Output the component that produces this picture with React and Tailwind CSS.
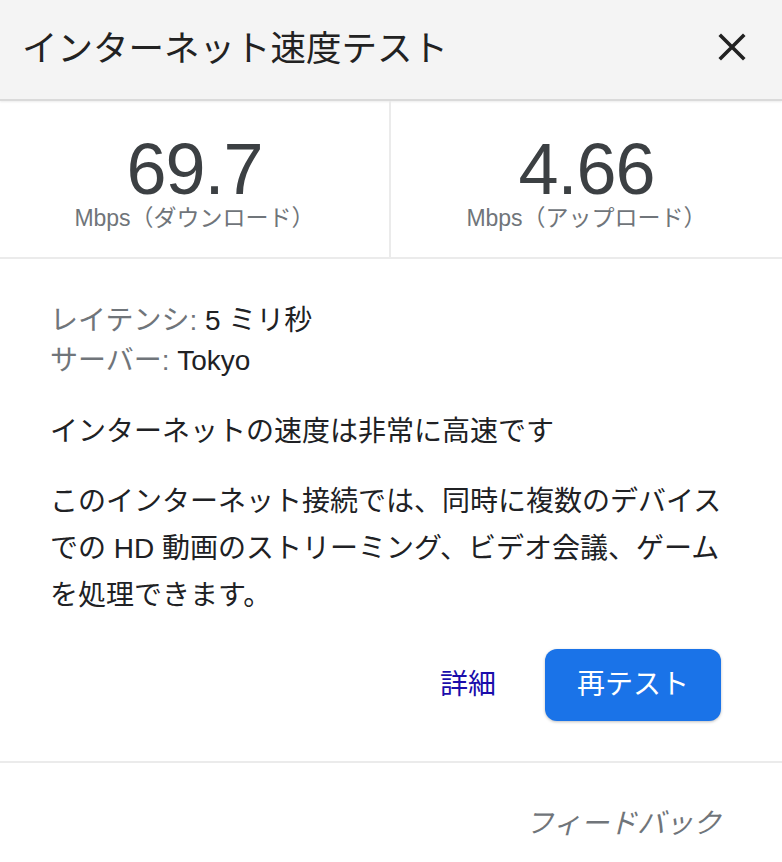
import React from "react";

const font = { fontFamily: '"Liberation Sans", "Noto Sans CJK JP", sans-serif' };

const Metric = ({ value, label, className }) => (
  <div className={`flex flex-col items-center pt-[30px] ${className}`}>
    <div className="text-[72px] leading-[76px] text-[#3c4043] tracking-[-1px]">{value}</div>
    <div className="text-[23px] leading-[30px] text-[#70757a] -mt-[4px]">{label}</div>
  </div>
);

export default function App() {
  return (
    <div className="w-[782px] h-[862px] bg-white overflow-hidden" style={font}>
      {/* Header */}
      <div className="h-[101px] bg-[#f4f4f4] border-b-2 border-[#dadada] flex items-center justify-between pl-[22px] pr-[32px] shadow-[0_1px_2px_rgba(0,0,0,0.08)]">
        <h1 className="text-[35.5px] text-[#222]">インターネット速度テスト</h1>
        <button className="w-[36px] h-[36px] flex items-center justify-center -mt-[5px]">
          <svg width="28" height="28" viewBox="0 0 28 28">
            <path d="M3 3 L25 25 M25 3 L3 25" stroke="#222" strokeWidth="3.6" strokeLinecap="square" />
          </svg>
        </button>
      </div>

      {/* Metrics */}
      <div className="grid grid-cols-2 h-[158px] border-b-2 border-[#ebebeb]">
        <Metric value="69.7" label="Mbps（ダウンロード）" className="border-r-2 border-[#ebebeb]" />
        <Metric value="4.66" label="Mbps（アップロード）" />
      </div>

      {/* Body */}
      <div className="pl-[50px] pr-[60px] pt-[42px] pb-[40px]">
        <div className="text-[28px] leading-[40px]">
          <div>
            <span className="text-[#70757a]">レイテンシ: </span>
            <span className="text-[#202124]">5 ミリ秒</span>
          </div>
          <div>
            <span className="text-[#70757a]">サーバー: </span>
            <span className="text-[#202124]">Tokyo</span>
          </div>
        </div>
        <p className="mt-[31px] text-[28px] leading-[40px] text-[#202124]">
          インターネットの速度は非常に高速です
        </p>
        <p className="mt-[26px] text-[28px] leading-[47px] text-[#202124] w-[680px]">
          このインターネット接続では、同時に複数のデバイスでの HD 動画のストリーミング、ビデオ会議、ゲームを処理できます。
        </p>
        <div className="mt-[30px] flex items-center justify-end gap-[49px] pr-[1px]">
          <a className="text-[28px] text-[#1a0dab] cursor-pointer">詳細</a>
          <button className="w-[176px] h-[72px] rounded-[12px] bg-[#1a73e8] text-white text-[28px] shadow-[0_1px_3px_rgba(0,0,0,0.25)]">
            再テスト
          </button>
        </div>
      </div>

      {/* Footer */}
      <div className="border-t-2 border-[#ebebeb] pt-[41px] pr-[61px] flex justify-end">
        <span className="text-[28px] leading-[40px] italic text-[#70757a]">フィードバック</span>
      </div>
    </div>
  );
}
